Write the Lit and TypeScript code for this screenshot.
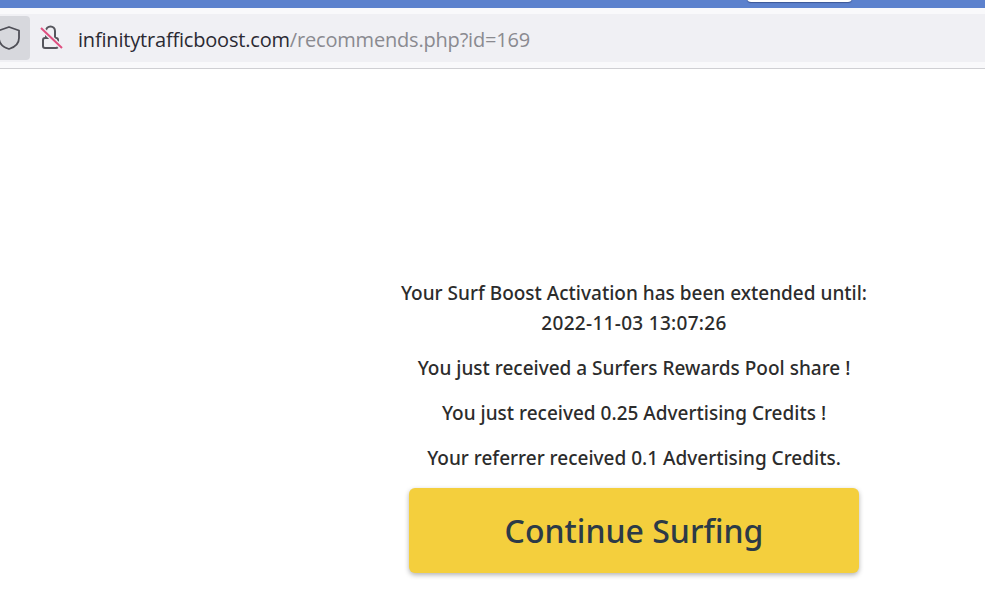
import { LitElement, html, css } from "lit";
import { customElement } from "lit/decorators.js";

@customElement("app-root")
export class AppRoot extends LitElement {
  static styles = css`
    :host { display: block; width: 985px; height: 616px; overflow: hidden; background: #fff; font-family: "Noto Sans", sans-serif; }
    .top { height: 8px; background: #5c81cd; position: relative; }
    .tab { position: absolute; left: 747px; top: -6px; width: 105px; height: 8px; background: #fff; border-radius: 0 0 4px 4px; box-shadow: 0 1px 1px #3c5796; }
    .chrome { background: #f9f9fb; border-bottom: 1px solid #cfcfd3; padding: 6px 0; box-sizing: border-box; height: 61px; }
    .urlbar { height: 48px; background: #f0f0f4; display: flex; align-items: center; }
    .shield { width: 30px; height: 44px; background: #d7d8dd; border-radius: 0 4px 4px 0; display: flex; align-items: center; justify-content: flex-end; overflow: hidden; flex: none; }
    .shield svg { margin-right: 9px; flex: none; }
    .lock { margin-left: 10px; flex: none; display: block; }
    .url { margin-left: 14px; padding-top: 2px; font-family: "Open Sans", sans-serif; font-size: 20px; color: #2b2a33; white-space: nowrap; letter-spacing: -0.19px; }
    .url span { color: #8a8a90; }
    main { width: 500px; margin-left: 384px; padding-top: 209px; text-align: center; color: #2c2c2c; font-size: 19px; line-height: 30px; font-weight: 500; }
    p { margin: 0 0 15px; }
    .date { letter-spacing: 0.3px; }
    .cta { display: flex; align-items: center; justify-content: center; width: 450px; height: 85px; margin: 15px auto 0; background: #f4cf3d; color: #2c3a47; border-radius: 6px; font-size: 32px; font-weight: 500; box-shadow: 0 2px 5px rgba(0,0,0,.3); }
  `;
  render() {
    return html`
      <div class="top"><div class="tab"></div></div>
      <div class="chrome">
        <div class="urlbar">
          <div class="shield">
            <svg width="24" height="26" viewBox="0 0 24 26" fill="none" stroke="#4f4f57" stroke-width="1.8"><path d="M12 2 L22 5.5 V13 C22 19 17 22.5 12 24 C7 22.5 2 19 2 13 V5.5 Z" stroke-linejoin="round"/></svg>
          </div>
          <svg class="lock" width="24" height="26" viewBox="0 0 24 26" fill="none">
            <path d="M6 13 V6 a4.5 4.5 0 0 1 9 0 V13" stroke="#55555c" stroke-width="2"/>
            <rect x="3" y="13" width="15" height="10" rx="2" stroke="#55555c" stroke-width="2"/>
            <path d="M1 3 L22 23" stroke="#f0f0f4" stroke-width="4.5"/>
            <path d="M1 3 L22 23" stroke="#df4f80" stroke-width="2"/>
          </svg>
          <div class="url">infinitytrafficboost.com<span>/recommends.php?id=169</span></div>
        </div>
      </div>
      <main>
        <p>Your Surf Boost Activation has been extended until:<br /><span class="date">2022-11-03 13:07:26</span></p>
        <p>You just received a Surfers Rewards Pool share !</p>
        <p>You just received 0.25 Advertising Credits !</p>
        <p>Your referrer received 0.1 Advertising Credits.</p>
        <div class="cta">Continue Surfing</div>
      </main>
    `;
  }
}
